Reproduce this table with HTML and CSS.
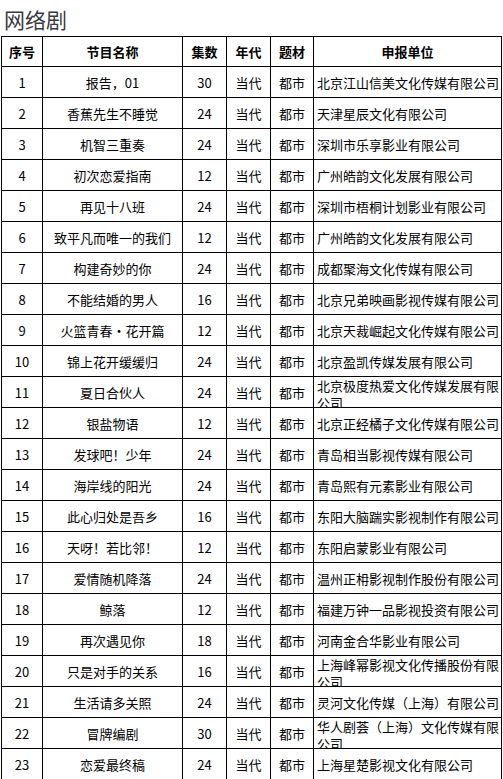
FILE: index.html
```html
<!DOCTYPE html>
<html lang="zh-CN">
<head>
<meta charset="utf-8">
<link rel="stylesheet" href="styles.css">
</head>
<body>
<div class="page">
  <div class="title">网络剧</div>
  <table class="list">
    <colgroup>
      <col class="c-no"><col class="c-name"><col class="c-ep"><col class="c-era"><col class="c-theme"><col class="c-org">
    </colgroup>
    <thead>
      <tr>
        <th><div class="cell">序号</div></th>
        <th><div class="cell">节目名称</div></th>
        <th><div class="cell">集数</div></th>
        <th><div class="cell">年代</div></th>
        <th><div class="cell">题材</div></th>
        <th><div class="cell">申报单位</div></th>
      </tr>
    </thead>
    <tbody>
      <tr><td><div class="cell">1</div></td><td><div class="cell">报告，01</div></td><td><div class="cell">30</div></td><td><div class="cell">当代</div></td><td><div class="cell">都市</div></td><td><div class="cell org">北京江山信美文化传媒有限公司</div></td></tr>
      <tr><td><div class="cell">2</div></td><td><div class="cell">香蕉先生不睡觉</div></td><td><div class="cell">24</div></td><td><div class="cell">当代</div></td><td><div class="cell">都市</div></td><td><div class="cell org">天津星辰文化有限公司</div></td></tr>
      <tr><td><div class="cell">3</div></td><td><div class="cell">机智三重奏</div></td><td><div class="cell">24</div></td><td><div class="cell">当代</div></td><td><div class="cell">都市</div></td><td><div class="cell org">深圳市乐享影业有限公司</div></td></tr>
      <tr><td><div class="cell">4</div></td><td><div class="cell">初次恋爱指南</div></td><td><div class="cell">12</div></td><td><div class="cell">当代</div></td><td><div class="cell">都市</div></td><td><div class="cell org">广州皓韵文化发展有限公司</div></td></tr>
      <tr><td><div class="cell">5</div></td><td><div class="cell">再见十八班</div></td><td><div class="cell">24</div></td><td><div class="cell">当代</div></td><td><div class="cell">都市</div></td><td><div class="cell org">深圳市梧桐计划影业有限公司</div></td></tr>
      <tr><td><div class="cell">6</div></td><td><div class="cell">致平凡而唯一的我们</div></td><td><div class="cell">12</div></td><td><div class="cell">当代</div></td><td><div class="cell">都市</div></td><td><div class="cell org">广州皓韵文化发展有限公司</div></td></tr>
      <tr><td><div class="cell">7</div></td><td><div class="cell">构建奇妙的你</div></td><td><div class="cell">24</div></td><td><div class="cell">当代</div></td><td><div class="cell">都市</div></td><td><div class="cell org">成都聚海文化传媒有限公司</div></td></tr>
      <tr><td><div class="cell">8</div></td><td><div class="cell">不能结婚的男人</div></td><td><div class="cell">16</div></td><td><div class="cell">当代</div></td><td><div class="cell">都市</div></td><td><div class="cell org">北京兄弟映画影视传媒有限公司</div></td></tr>
      <tr><td><div class="cell">9</div></td><td><div class="cell">火篮青春·花开篇</div></td><td><div class="cell">12</div></td><td><div class="cell">当代</div></td><td><div class="cell">都市</div></td><td><div class="cell org">北京天裁崛起文化传媒有限公司</div></td></tr>
      <tr><td><div class="cell">10</div></td><td><div class="cell">锦上花开缓缓归</div></td><td><div class="cell">24</div></td><td><div class="cell">当代</div></td><td><div class="cell">都市</div></td><td><div class="cell org">北京盈凯传媒发展有限公司</div></td></tr>
      <tr><td><div class="cell">11</div></td><td><div class="cell">夏日合伙人</div></td><td><div class="cell">24</div></td><td><div class="cell">当代</div></td><td><div class="cell">都市</div></td><td><div class="cell org">北京极度热爱文化传媒发展有限公司</div></td></tr>
      <tr><td><div class="cell">12</div></td><td><div class="cell">银盐物语</div></td><td><div class="cell">12</div></td><td><div class="cell">当代</div></td><td><div class="cell">都市</div></td><td><div class="cell org">北京正经橘子文化传媒有限公司</div></td></tr>
      <tr><td><div class="cell">13</div></td><td><div class="cell">发球吧！少年</div></td><td><div class="cell">24</div></td><td><div class="cell">当代</div></td><td><div class="cell">都市</div></td><td><div class="cell org">青岛相当影视传媒有限公司</div></td></tr>
      <tr><td><div class="cell">14</div></td><td><div class="cell">海岸线的阳光</div></td><td><div class="cell">24</div></td><td><div class="cell">当代</div></td><td><div class="cell">都市</div></td><td><div class="cell org">青岛熙有元素影业有限公司</div></td></tr>
      <tr><td><div class="cell">15</div></td><td><div class="cell">此心归处是吾乡</div></td><td><div class="cell">16</div></td><td><div class="cell">当代</div></td><td><div class="cell">都市</div></td><td><div class="cell org">东阳大脑踹实影视制作有限公司</div></td></tr>
      <tr><td><div class="cell">16</div></td><td><div class="cell">天呀！若比邻！</div></td><td><div class="cell">12</div></td><td><div class="cell">当代</div></td><td><div class="cell">都市</div></td><td><div class="cell org">东阳启蒙影业有限公司</div></td></tr>
      <tr><td><div class="cell">17</div></td><td><div class="cell">爱情随机降落</div></td><td><div class="cell">24</div></td><td><div class="cell">当代</div></td><td><div class="cell">都市</div></td><td><div class="cell org">温州正枏影视制作股份有限公司</div></td></tr>
      <tr><td><div class="cell">18</div></td><td><div class="cell">鲸落</div></td><td><div class="cell">12</div></td><td><div class="cell">当代</div></td><td><div class="cell">都市</div></td><td><div class="cell org">福建万钟一品影视投资有限公司</div></td></tr>
      <tr><td><div class="cell">19</div></td><td><div class="cell">再次遇见你</div></td><td><div class="cell">18</div></td><td><div class="cell">当代</div></td><td><div class="cell">都市</div></td><td><div class="cell org">河南金合华影业有限公司</div></td></tr>
      <tr><td><div class="cell">20</div></td><td><div class="cell">只是对手的关系</div></td><td><div class="cell">16</div></td><td><div class="cell">当代</div></td><td><div class="cell">都市</div></td><td><div class="cell org">上海峰幂影视文化传播股份有限公司</div></td></tr>
      <tr><td><div class="cell">21</div></td><td><div class="cell">生活请多关照</div></td><td><div class="cell">24</div></td><td><div class="cell">当代</div></td><td><div class="cell">都市</div></td><td><div class="cell org">灵河文化传媒（上海）有限公司</div></td></tr>
      <tr><td><div class="cell">22</div></td><td><div class="cell">冒牌编剧</div></td><td><div class="cell">30</div></td><td><div class="cell">当代</div></td><td><div class="cell">都市</div></td><td><div class="cell org">华人剧荟（上海）文化传媒有限公司</div></td></tr>
      <tr><td><div class="cell">23</div></td><td><div class="cell">恋爱最终稿</div></td><td><div class="cell">24</div></td><td><div class="cell">当代</div></td><td><div class="cell">都市</div></td><td><div class="cell org">上海星楚影视文化有限公司</div></td></tr>
    </tbody>
  </table>
</div>
</body>
</html>
```
FILE: styles.css
```css
html, body {
  margin: 0;
  padding: 0;
  background: #ffffff;
}

.page {
  width: 503px;
  font-family: "Noto Sans CJK SC", "Noto Sans", sans-serif;
  color: #000;
}

.title {
  height: 32px;
  padding: 4px 0 0 4px;
  font-size: 21px;
  line-height: 30px;
  color: #3a3a44;
  font-weight: 400;
}

.list {
  margin-left: 1px;
  width: 501px;
  border-collapse: collapse;
  table-layout: fixed;
  font-size: 13px;
}

.c-no { width: 41px; }
.c-name { width: 140px; }
.c-ep { width: 44px; }
.c-era { width: 44px; }
.c-theme { width: 43px; }
.c-org { width: 188px; }

.list th,
.list td {
  border: 1px solid #000;
  padding: 0;
}

.cell {
  height: 30px;
  display: flex;
  align-items: safe center;
  justify-content: center;
  overflow: hidden;
  line-height: 17px;
  text-align: center;
}

.list th .cell {
  height: 29px;
  font-weight: 700;
}

.cell.org {
  justify-content: flex-start;
  text-align: left;
  padding-left: 3px;
}
```
